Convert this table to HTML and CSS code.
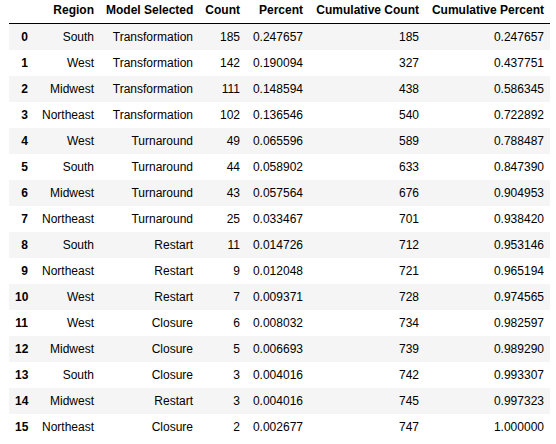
FILE: index.html
```html
<!DOCTYPE html>
<html>
<head>
<meta charset="utf-8">
<link rel="stylesheet" href="styles.css">
</head>
<body>
<table class="df">
<colgroup>
<col class="c-idx"><col class="c-region"><col class="c-model"><col class="c-count"><col class="c-pct"><col class="c-ccount"><col class="c-cpct">
</colgroup>
<thead>
<tr><th></th><th>Region</th><th>Model Selected</th><th>Count</th><th>Percent</th><th>Cumulative Count</th><th>Cumulative Percent</th></tr>
</thead>
<tbody>
<tr><th>0</th><td>South</td><td>Transformation</td><td>185</td><td>0.247657</td><td>185</td><td>0.247657</td></tr>
<tr><th>1</th><td>West</td><td>Transformation</td><td>142</td><td>0.190094</td><td>327</td><td>0.437751</td></tr>
<tr><th>2</th><td>Midwest</td><td>Transformation</td><td>111</td><td>0.148594</td><td>438</td><td>0.586345</td></tr>
<tr><th>3</th><td>Northeast</td><td>Transformation</td><td>102</td><td>0.136546</td><td>540</td><td>0.722892</td></tr>
<tr><th>4</th><td>West</td><td>Turnaround</td><td>49</td><td>0.065596</td><td>589</td><td>0.788487</td></tr>
<tr><th>5</th><td>South</td><td>Turnaround</td><td>44</td><td>0.058902</td><td>633</td><td>0.847390</td></tr>
<tr><th>6</th><td>Midwest</td><td>Turnaround</td><td>43</td><td>0.057564</td><td>676</td><td>0.904953</td></tr>
<tr><th>7</th><td>Northeast</td><td>Turnaround</td><td>25</td><td>0.033467</td><td>701</td><td>0.938420</td></tr>
<tr><th>8</th><td>South</td><td>Restart</td><td>11</td><td>0.014726</td><td>712</td><td>0.953146</td></tr>
<tr><th>9</th><td>Northeast</td><td>Restart</td><td>9</td><td>0.012048</td><td>721</td><td>0.965194</td></tr>
<tr><th>10</th><td>West</td><td>Restart</td><td>7</td><td>0.009371</td><td>728</td><td>0.974565</td></tr>
<tr><th>11</th><td>West</td><td>Closure</td><td>6</td><td>0.008032</td><td>734</td><td>0.982597</td></tr>
<tr><th>12</th><td>Midwest</td><td>Closure</td><td>5</td><td>0.006693</td><td>739</td><td>0.989290</td></tr>
<tr><th>13</th><td>South</td><td>Closure</td><td>3</td><td>0.004016</td><td>742</td><td>0.993307</td></tr>
<tr><th>14</th><td>Midwest</td><td>Restart</td><td>3</td><td>0.004016</td><td>745</td><td>0.997323</td></tr>
<tr><th>15</th><td>Northeast</td><td>Closure</td><td>2</td><td>0.002677</td><td>747</td><td>1.000000</td></tr>
</tbody>
</table>
</body>
</html>
```
FILE: styles.css
```css
html, body {
  margin: 0;
  padding: 0;
  background: #ffffff;
}
body {
  padding-left: 9px;
  font-family: "Liberation Sans", Arial, sans-serif;
  font-size: 12px;
  color: #000000;
}
.df {
  border-collapse: collapse;
  border-spacing: 0;
  border: none;
  table-layout: fixed;
  width: 541px;
}
.c-idx { width: 25px; }
.c-region { width: 66px; }
.c-model { width: 99px; }
.c-count { width: 47px; }
.c-pct { width: 63px; }
.c-ccount { width: 116px; }
.c-cpct { width: 125px; }
.df th, .df td {
  text-align: right;
  vertical-align: middle;
  padding: 6px 6px;
  line-height: 14px;
  white-space: nowrap;
  border: none;
}
.df th {
  font-weight: bold;
}
.df thead th {
  padding-top: 3px;
  padding-bottom: 6px;
  border-bottom: 1px solid #000000;
}
.df tbody tr:nth-child(odd) {
  background: #f5f5f5;
}
```
